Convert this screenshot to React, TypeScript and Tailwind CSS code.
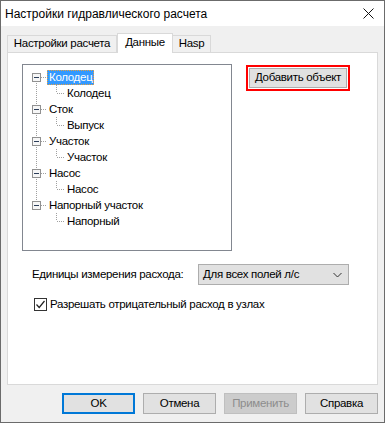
import React from "react";

type Group = { label: string; child: string; selected?: boolean };

const groups: Group[] = [
  { label: "Колодец", child: "Колодец", selected: true },
  { label: "Сток", child: "Выпуск" },
  { label: "Участок", child: "Участок" },
  { label: "Насос", child: "Насос" },
  { label: "Напорный участок", child: "Напорный" },
];

const LINE = "#a0a0a0";

const ParentLead: React.FC<{ first: boolean; last: boolean }> = ({ first, last }) => (
  <svg width="24" height="16" shapeRendering="crispEdges" className="shrink-0">
    {!first && <line x1="13.5" y1="0" x2="13.5" y2="4" stroke={LINE} strokeDasharray="1 1" />}
    {!last && <line x1="13.5" y1="12" x2="13.5" y2="16" stroke={LINE} strokeDasharray="1 1" />}
    <rect x="9.5" y="4.5" width="8" height="8" fill="#f6f6f6" stroke="#919191" />
    <line x1="11" y1="8.5" x2="16" y2="8.5" stroke="#2c3e5a" />
    <line x1="18" y1="8.5" x2="24" y2="8.5" stroke={LINE} strokeDasharray="1 1" />
  </svg>
);

const ChildLead: React.FC<{ trunk: boolean }> = ({ trunk }) => (
  <>
    <svg width="24" height="16" shapeRendering="crispEdges" className="shrink-0">
      {trunk && <line x1="13.5" y1="0" x2="13.5" y2="16" stroke={LINE} strokeDasharray="1 1" />}
    </svg>
    <svg width="18" height="16" shapeRendering="crispEdges" className="shrink-0">
      <line x1="9.5" y1="0" x2="9.5" y2="8" stroke={LINE} strokeDasharray="1 1" />
      <line x1="10" y1="8.5" x2="17" y2="8.5" stroke={LINE} strokeDasharray="1 1" />
    </svg>
  </>
);

const Label: React.FC<{ text: string; selected?: boolean }> = ({ text, selected }) => (
  <span
    className={
      selected
        ? "h-[15px] px-[1px] leading-[13px] bg-[#3399ff] text-white border border-dotted border-[#e8a040]"
        : "h-[15px] px-[2px] leading-[15px]"
    }
  >
    {text}
  </span>
);

const Tree: React.FC = () => (
  <div className="w-[210px] h-[187px] border border-[#828790] bg-white pt-[4px] overflow-hidden">
    {groups.map((g, i) => (
      <div key={i}>
        <div className="flex items-center h-[16px]">
          <ParentLead first={i === 0} last={i === groups.length - 1} />
          <Label text={g.label} selected={g.selected} />
        </div>
        <div className="flex items-center h-[16px]">
          <ChildLead trunk={i !== groups.length - 1} />
          <Label text={g.child} />
        </div>
      </div>
    ))}
  </div>
);

const Button: React.FC<{ text: string; def?: boolean; disabled?: boolean }> = ({ text, def, disabled }) => (
  <div
    className={
      "w-[73px] h-[21px] flex items-center justify-center " +
      (def
        ? "border-2 border-[#0078d7] bg-[#e1e1e1]"
        : disabled
        ? "border border-[#bfbfbf] bg-[#cccccc] text-[#8d8d8d]"
        : "border border-[#adadad] bg-[#e1e1e1]")
    }
  >
    {text}
  </div>
);

export default function App() {
  return (
    <div className="w-[385px] h-[423px] border border-[#6b6b6b] bg-[#f0f0f0] flex flex-col text-[11.5px] tracking-[-0.3px] text-black font-['Liberation_Sans',Arial,sans-serif] whitespace-nowrap select-none">
      <div className="h-[25px] bg-white flex items-center justify-between pl-[4px] pr-[10px] shrink-0 text-[12px] tracking-normal">
        <span>Настройки гидравлического расчета</span>
        <svg width="11" height="11" shapeRendering="geometricPrecision">
          <path d="M0.5 0.5 L10.5 10.5 M10.5 0.5 L0.5 10.5" stroke="#111" strokeWidth="1" />
        </svg>
      </div>

      <div className="flex-1 flex flex-col px-[6px] pt-[7px] pb-[8px]">
        <div className="flex items-end h-[19px] shrink-0">
          <div className="w-[110px] h-[17px] border border-b-0 border-[#d9d9d9] bg-[#f0f0f0] flex items-center justify-center">
            Настройки расчета
          </div>
          <div className="relative z-10 w-[56px] h-[20px] -mb-[1px] border border-b-0 border-[#d9d9d9] bg-white flex items-center justify-center pb-[1px]">
            Данные
          </div>
          <div className="w-[38px] h-[17px] border border-b-0 border-l-0 border-[#d9d9d9] bg-[#f0f0f0] flex items-center justify-center">
            Hasp
          </div>
        </div>

        <div className="flex-1 border border-[#d9d9d9] bg-white flex flex-col pt-[11px]">
          <div className="flex items-start">
            <div className="ml-[14px]">
              <Tree />
            </div>
            <div className="ml-[14px] mt-[1px] border-2 border-[#ff0000] p-px">
              <div className="w-[98px] h-[20px] border border-[#adadad] bg-[#e1e1e1] flex items-center justify-center">
                Добавить объект
              </div>
            </div>
          </div>

          <div className="flex items-center mt-[13px] ml-[24px]">
            <span className="w-[166px]">Единицы измерения расхода:</span>
            <div className="w-[151px] h-[21px] border border-[#adadad] bg-[#e1e1e1] flex items-center justify-between pl-[4px] pr-[6px]">
              <span>Для всех полей л/с</span>
              <svg width="9" height="6" shapeRendering="geometricPrecision">
                <path d="M0.5 1 L4.5 5 L8.5 1" stroke="#333" fill="none" strokeWidth="1" />
              </svg>
            </div>
          </div>

          <div className="flex items-center mt-[11px] ml-[26px]">
            <div className="w-[13px] h-[13px] border border-[#333] bg-white flex items-center justify-center">
              <svg width="11" height="11">
                <path d="M1.5 5.5 L4.2 8.5 L9.5 2" stroke="#222" fill="none" strokeWidth="1.2" />
              </svg>
            </div>
            <span className="ml-[3px]">Разрешать отрицательный расход в узлах</span>
          </div>
        </div>

        <div className="flex justify-end gap-[8px] mt-[8px] shrink-0">
          <Button text="OK" def />
          <Button text="Отмена" />
          <Button text="Применить" disabled />
          <Button text="Справка" />
        </div>
      </div>
    </div>
  );
}
